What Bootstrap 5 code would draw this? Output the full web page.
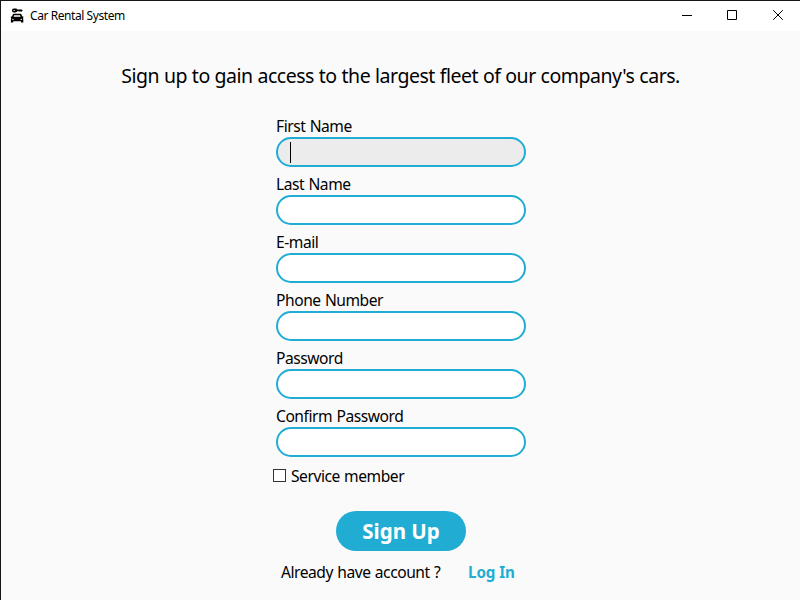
<!DOCTYPE html>
<html lang="en">
<head>
<meta charset="utf-8">
<meta name="viewport" content="width=device-width, initial-scale=1">
<title>Car Rental System</title>
<link href="https://cdn.jsdelivr.net/npm/bootstrap@5.3.0/dist/css/bootstrap.min.css" rel="stylesheet">
<style>
:root { --accent: #21add3; }
body { font-family: "Segoe UI", "Noto Sans", "Open Sans", sans-serif; color: #000; background: #fafafa; }
.app-window { height: 600px; border-top: 1px solid #151515; border-left: 1px solid #151515; }
.title-bar { height: 30px; padding-left: 9px; background: #fff; }
.app-name { font-size: 12px; line-height: 16px; margin-left: 6px; letter-spacing: -.43px; }
.win-buttons { margin-right: -1px; }
.win-btn { width: 46px; height: 30px; padding: 0 0 2px; border: 0; background: none; line-height: 0; }
.win-btn:first-child { width: 45px; }
.headline { font-size: 19.5px; line-height: 28px; margin: 31px 0 0; letter-spacing: -.49px; word-spacing: .3px; white-space: nowrap; }
.signup-form { width: 250px; margin: 26px 0 0 275px; }
.field-label { display: block; height: 21px; font-size: 15.6px; line-height: 20px; letter-spacing: -.46px; word-spacing: .7px; white-space: nowrap; }
.pill-input, .pill-input:focus { display: block; height: 30px; padding: 2px 12px; margin-bottom: 7px; border: 2px solid var(--accent); border-radius: 15px; background: #fff; box-shadow: none; }
.pill-input.active { background: #ececec; }
.caret { width: 1px; height: 21px; background: #000; margin-top: 1px; }
.service-row { margin: 9px 0 0 -3px; height: 21px; }
.square-check.form-check-input { width: 13px; height: 13px; margin: 0 5px 2px 0; border: 1px solid #333; border-radius: 0; background: #fff; }
.signup-btn { width: 130px; height: 40px; margin: 24px 0 0 60px; padding: 0; border: 0; border-radius: 20px; background: var(--accent); color: #fff; font-size: 20.5px; font-weight: 700; line-height: 39px; }
.login-row { margin: 11px 0 0 5px; height: 21px; white-space: nowrap; }
.login-link { font-size: 15.2px; line-height: 21px; font-weight: 700; color: var(--accent); letter-spacing: -.08px; }
.login-text { width: 187px; }
</style>
</head>
<body>
<div class="app-window overflow-hidden">
  <header class="title-bar d-flex align-items-center">
    <svg width="14" height="16" viewBox="0 0 14 16" fill="#000">
      <path fill-rule="evenodd" d="M3.900.6h1.600c.9 0 1.400.5 1.700 1H11.800l.9.9-.9 1.200-1-.4-1 .5-1-.5H7.200c-.3.700-.8 1.200-1.700 1.200H3.900C2.700 4.500 2 3.600 2 2.500S2.700.6 3.900.6zM3.600 2v1.100h1.100V2z"/>
      <path fill-rule="evenodd" d="M4.200 5.800h5.800c.9 0 1.300.3 1.600 1l.7 1.600h1.100v1.200l-.5.4.4.9v3.500h-2.300v-1.100H3.200v1.100H.9v-3.500l.4-.9-.5-.4V8.400h1.200l.7-1.600c.3-.7.700-1 1.500-1zM4.200 7.200l-.6 1.500h7l-.6-1.500zM2.200 10.700v1.100l1.500.3.300-.7zM12 10.700v1.100l-1.500.3-.3-.7z"/>
    </svg>
    <span class="app-name">Car Rental System</span>
    <div class="win-buttons d-flex ms-auto">
      <button class="win-btn" aria-label="Minimize"><svg width="10" height="10"><path d="M0 5.500H10" stroke="#000"/></svg></button>
      <button class="win-btn" aria-label="Maximize"><svg width="10" height="10"><path d="M.5.5h9v9h-9z" fill="none" stroke="#000"/></svg></button>
      <button class="win-btn" aria-label="Close"><svg width="10" height="10"><path d="M.2.2l9.600 9.600m0-9.600l-9.600 9.600" stroke="#000"/></svg></button>
    </div>
  </header>
  <main>
    <p class="headline text-center">Sign up to gain access to the largest fleet of our company's cars.</p>
    <form class="signup-form">
      <label class="field-label">First Name</label>
      <div class="form-control pill-input active"><div class="caret"></div></div>
      <label class="field-label" for="last">Last Name</label>
      <input class="form-control pill-input" id="last">
      <label class="field-label" for="email">E-mail</label>
      <input class="form-control pill-input" id="email" type="email">
      <label class="field-label" for="phone">Phone Number</label>
      <input class="form-control pill-input" id="phone" type="tel">
      <label class="field-label" for="pass">Password</label>
      <input class="form-control pill-input" id="pass" type="password">
      <label class="field-label" for="confirm">Confirm Password</label>
      <input class="form-control pill-input" id="confirm" type="password">
      <div class="service-row d-flex align-items-center">
        <input class="form-check-input square-check" type="checkbox" id="service">
        <label class="field-label" for="service">Service member</label>
      </div>
      <button type="button" class="btn signup-btn d-block">Sign Up</button>
      <div class="login-row d-flex">
        <span class="field-label login-text">Already have account ?</span>
        <a class="login-link text-decoration-none" href="#">Log In</a>
      </div>
    </form>
  </main>
</div>
<script src="https://cdn.jsdelivr.net/npm/bootstrap@5.3.0/dist/js/bootstrap.bundle.min.js"></script>
</body>
</html>
